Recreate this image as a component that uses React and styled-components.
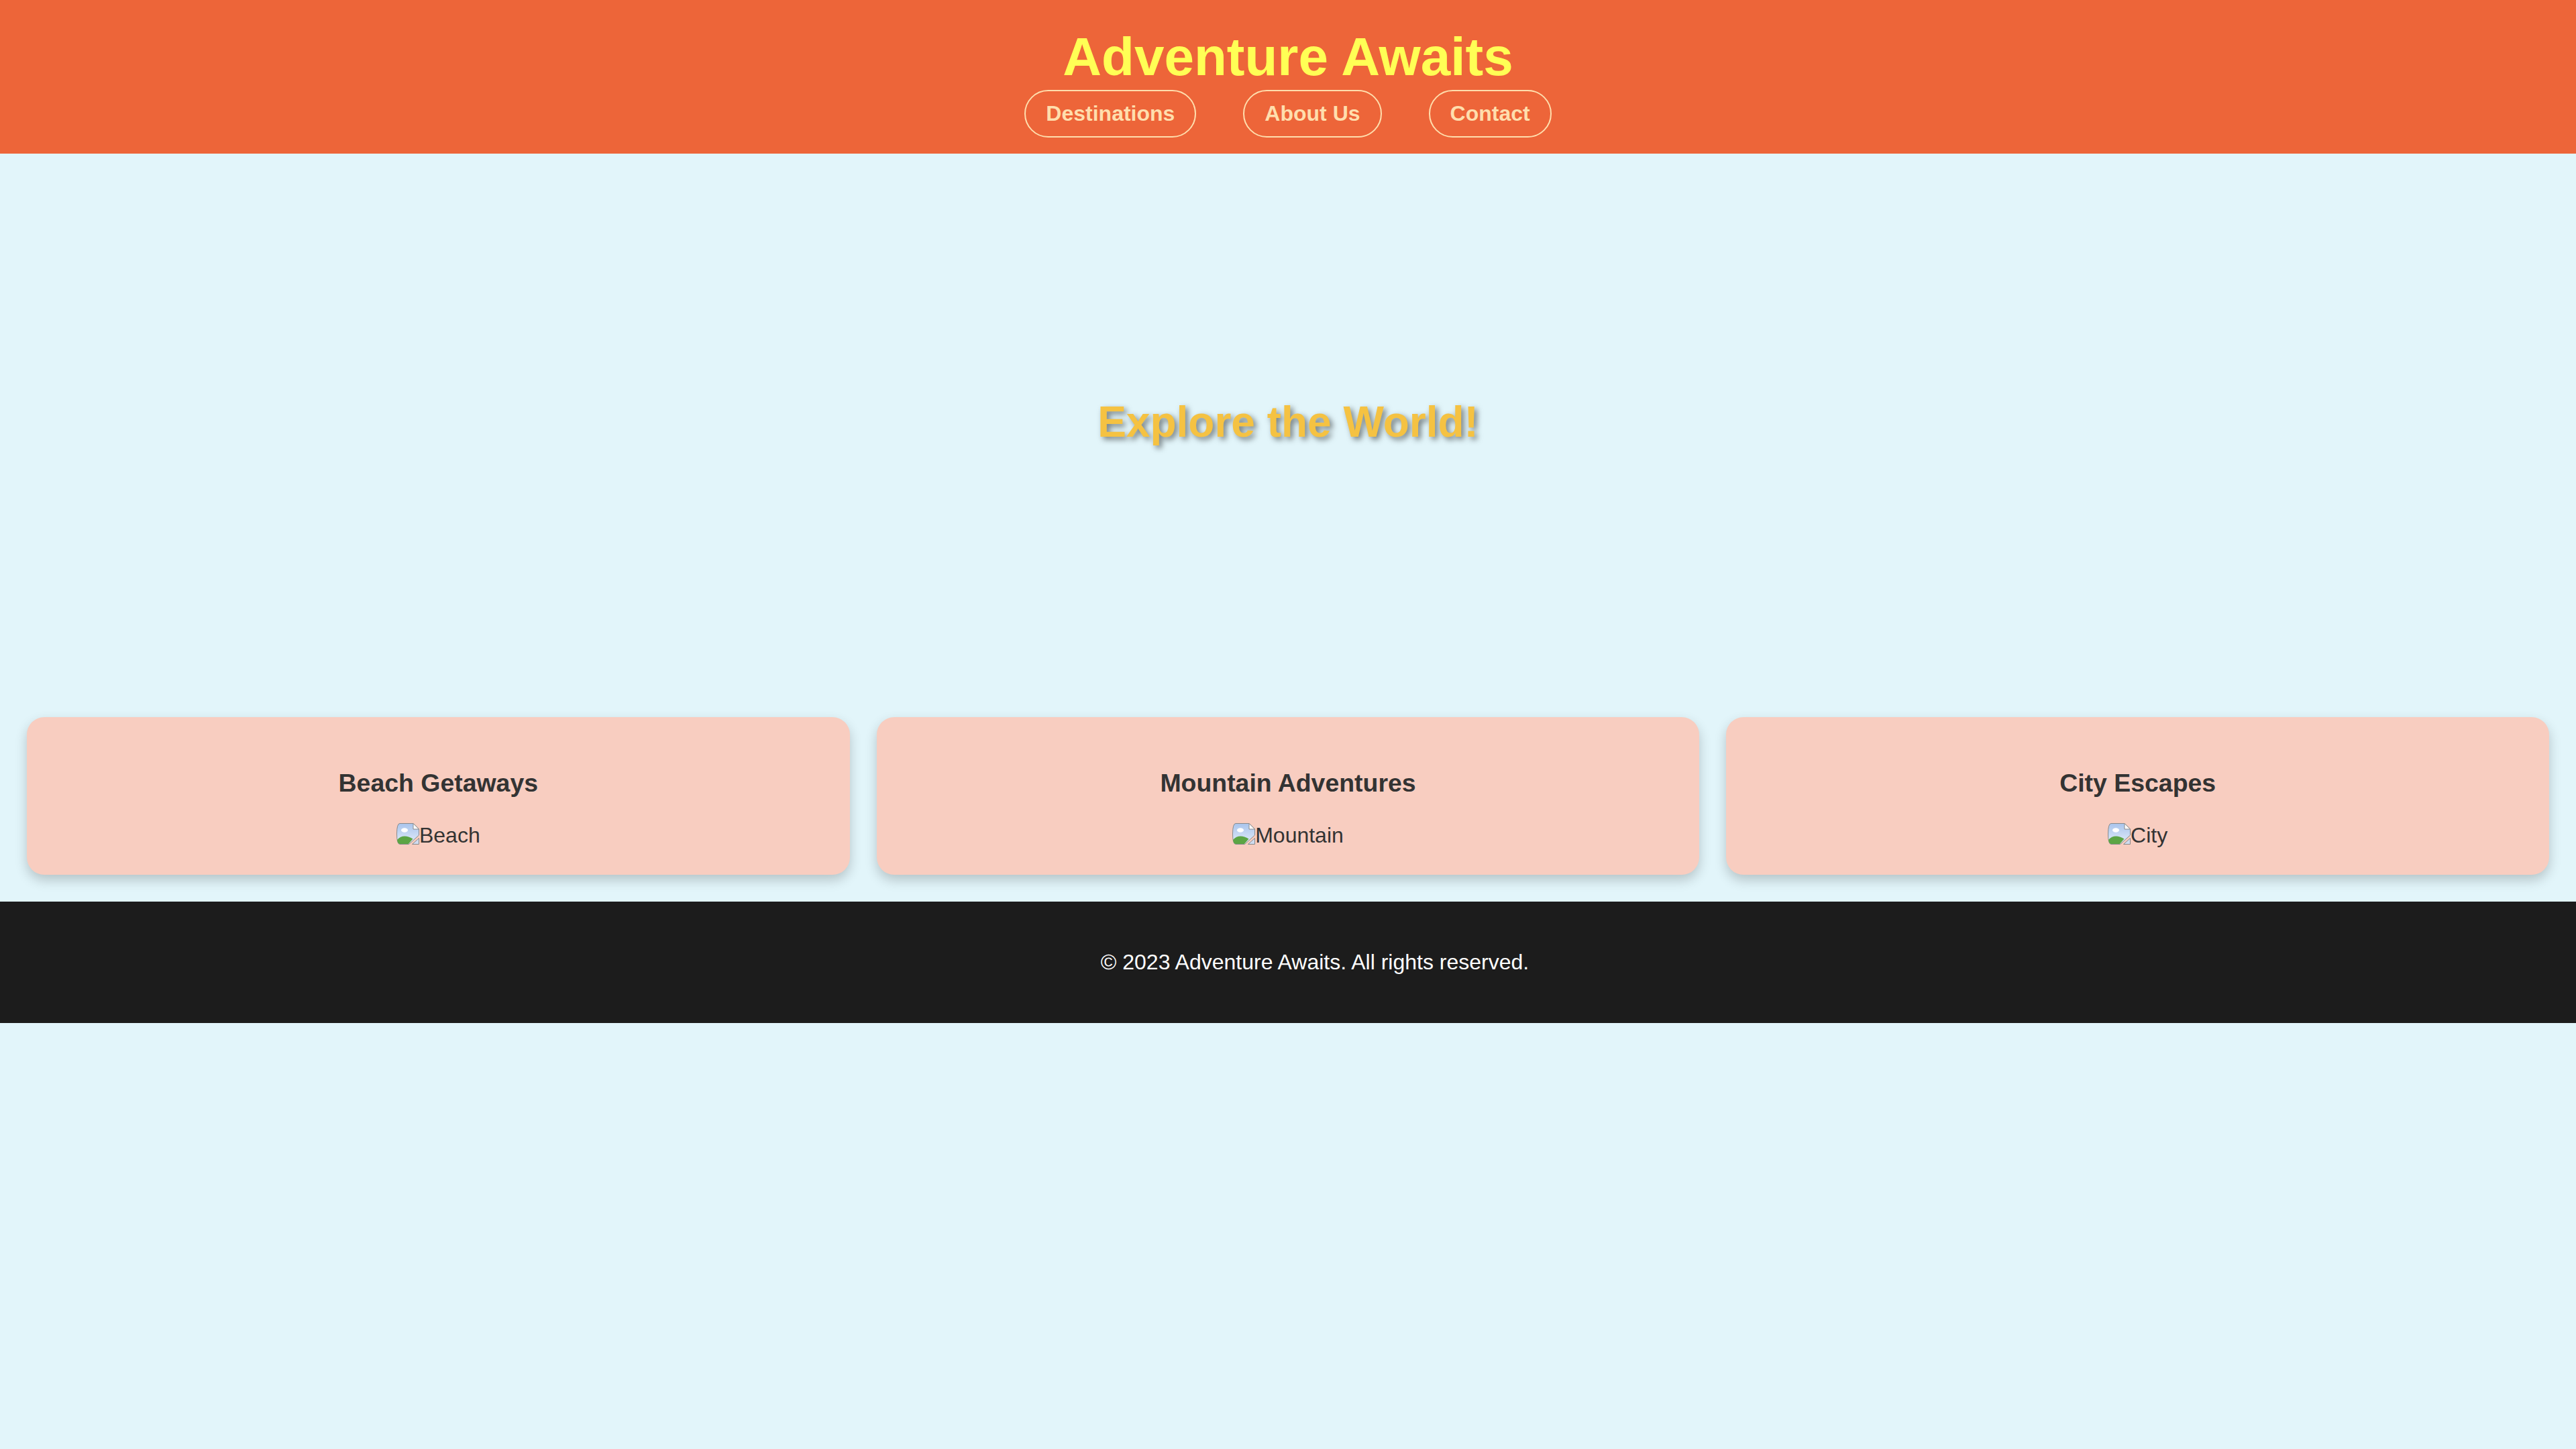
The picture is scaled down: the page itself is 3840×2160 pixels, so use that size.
import React from "react";
import styled, { createGlobalStyle } from "styled-components";

const GlobalStyle = createGlobalStyle`
  html, body {
    margin: 0;
    padding: 0;
    background: #e2f5fa;
    font-family: "Liberation Sans", Arial, Helvetica, sans-serif;
    font-size: 32px;
    color: #333;
  }
`;

const Header = styled.header`
  background: #ed6539;
  text-align: center;
  padding: 39px 0 24px 0;
`;

const Title = styled.h1`
  margin: 0;
  font-size: 80px;
  font-weight: 700;
  line-height: normal;
  color: #ffff55;
`;

const Nav = styled.nav`
  display: flex;
  justify-content: center;
  gap: 70px;
  margin-top: 3px;
`;

const NavButton = styled.a`
  display: inline-block;
  font-size: 32px;
  font-weight: 700;
  line-height: normal;
  color: #ffdead;
  text-decoration: none;
  padding: 15px 30px;
  border: 2px solid #ffdead;
  border-radius: 999px;
  cursor: pointer;
`;

const Hero = styled.section`
  height: 800px;
  display: flex;
  align-items: center;
  justify-content: center;
`;

const HeroText = styled.h2`
  margin: 0;
  font-size: 64px;
  font-weight: 700;
  line-height: normal;
  color: #f5c242;
  text-shadow: 4px 4px 8px rgba(0, 0, 0, 0.5);
`;

const CardGrid = styled.section`
  display: grid;
  grid-template-columns: repeat(3, 1fr);
  gap: 40px;
  padding: 40px;
`;

const Card = styled.div`
  background: #f8cdc0;
  border-radius: 26px;
  padding: 40px;
  text-align: center;
  box-shadow: 0 8px 18px rgba(0, 0, 0, 0.2);
`;

const CardTitle = styled.h3`
  margin: 37.44px 0;
  font-size: 37.44px;
  font-weight: 700;
  line-height: normal;
  color: #333;
`;

const AltText = styled.div`
  font-size: 32px;
  line-height: normal;
  color: #333;
`;

const BrokenIcon = styled.svg`
  width: 34px;
  height: 32px;
  vertical-align: -3px;
`;

const Footer = styled.footer`
  background: #1c1c1c;
  color: #fff;
  text-align: center;
  padding: 40px 0 40px 80px;
`;

const FooterText = styled.p`
  margin: 32px 0;
  font-size: 32px;
  line-height: normal;
`;

const BrokenImage = ({ alt, id }) => (
  <AltText>
    <BrokenIcon viewBox="0 0 34 32" aria-hidden="true">
      <defs>
        <linearGradient id={`sky-${id}`} x1="0" y1="0" x2="0" y2="1">
          <stop offset="0" stopColor="#a9c4ec" />
          <stop offset="1" stopColor="#e4edf9" />
        </linearGradient>
      </defs>
      <path
        d="M5 0.5 H25 L33.5 9 V18 L18.5 31.5 H5 Q0.5 31.5 0.5 16 Q0.5 0.5 5 0.5 Z"
        fill={`url(#sky-${id})`}
        stroke="#8a8a8a"
        strokeWidth="1"
      />
      <ellipse cx="12" cy="10.5" rx="5" ry="3.2" fill="#fff" />
      <path d="M1 25 Q10 15 24.5 23.5 L18 31 H5 Q2 31 1 25 Z" fill="#5ca544" />
      <path d="M23.5 31.5 L33.5 22.5 V31.5 Z" fill="#cfdcf0" stroke="#8a8a8a" strokeWidth="1" />
      <path d="M25 0.5 V9 H33.5 Z" fill="#fff" stroke="#8a8a8a" strokeWidth="1" strokeLinejoin="round" />
    </BrokenIcon>
    {alt}
  </AltText>
);

const destinations = [
  { title: "Beach Getaways", alt: "Beach" },
  { title: "Mountain Adventures", alt: "Mountain" },
  { title: "City Escapes", alt: "City" },
];

const App = () => {
  return (
    <>
      <GlobalStyle />
      <Header>
        <Title>Adventure Awaits</Title>
        <Nav>
          <NavButton>Destinations</NavButton>
          <NavButton>About Us</NavButton>
          <NavButton>Contact</NavButton>
        </Nav>
      </Header>
      <Hero>
        <HeroText>Explore the World!</HeroText>
      </Hero>
      <CardGrid>
        {destinations.map((d, i) => (
          <Card key={i}>
            <CardTitle>{d.title}</CardTitle>
            <BrokenImage alt={d.alt} id={i} />
          </Card>
        ))}
      </CardGrid>
      <Footer>
        <FooterText>© 2023 Adventure Awaits. All rights reserved.</FooterText>
      </Footer>
    </>
  );
};

export default App;
